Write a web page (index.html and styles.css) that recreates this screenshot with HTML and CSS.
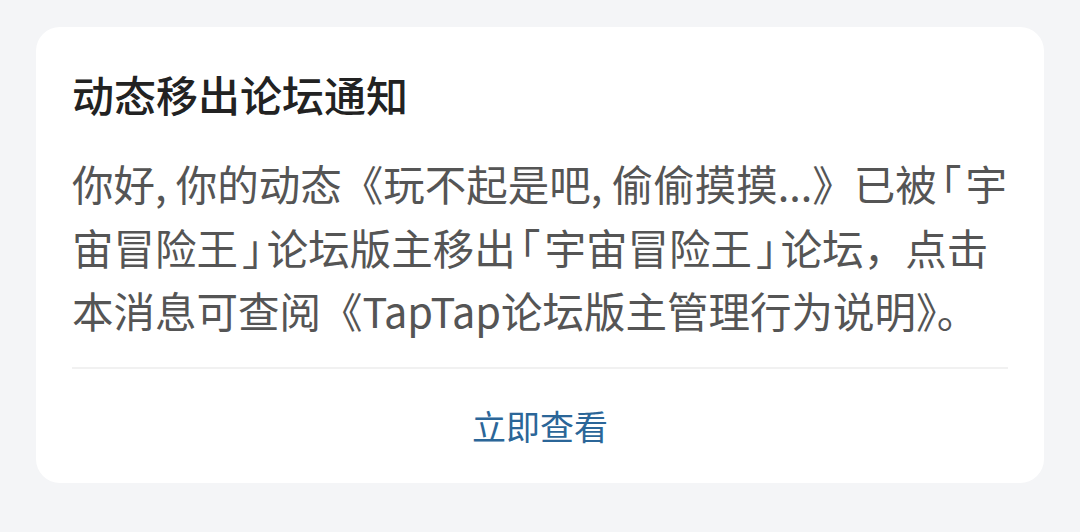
FILE: index.html
```html
<!DOCTYPE html>
<html lang="zh-CN">
<head>
<meta charset="utf-8">
<title>动态移出论坛通知</title>
<link rel="stylesheet" href="styles.css">
</head>
<body>
  <main class="page">
    <section class="notice">
      <h1 class="notice-title">动态移出论坛通知</h1>
      <p class="notice-body">你好, 你的动态《玩不起是吧, 偷偷摸摸...》已被<span class="bk">「</span>宇<br>宙冒险王<span class="bk">」</span>论坛版主移出<span class="bk">「</span>宇宙冒险王<span class="bk">」</span>论坛，点击<br>本消息可查阅《TapTap论坛版主管理行为说明》。</p>
      <div class="notice-divider"></div>
      <a class="notice-action" href="#">立即查看</a>
    </section>
  </main>
</body>
</html>
```

FILE: styles.css
```css
html, body {
  margin: 0;
  padding: 0;
  background: #f4f5f7;
}

body {
  font-family: "Noto Sans CJK SC", "Noto Sans", sans-serif;
  width: 1080px;
  height: 532px;
  overflow: hidden;
}

.page {
  padding: 27px 36px 0;
}

.notice {
  background: #ffffff;
  border-radius: 24px;
  padding: 39px 36px 0;
  display: flex;
  flex-direction: column;
}

.notice-title {
  margin: 0;
  font-size: 42px;
  line-height: 56px;
  font-weight: 500;
  color: #222222;
}

.notice-body {
  margin: 30px 0 24px;
  font-size: 41.5px;
  line-height: 63.5px;
  color: #555555;
  white-space: nowrap;
}

/* corner brackets set half-width with a little air around them */
.bk {
  font-feature-settings: "halt";
  padding: 0 4px;
}

.notice-divider {
  height: 2px;
  background: #f1f1f1;
}

.notice-action {
  height: 114px;
  display: flex;
  align-items: center;
  justify-content: center;
  font-size: 34px;
  color: #2b6698;
  text-decoration: none;
}
```
